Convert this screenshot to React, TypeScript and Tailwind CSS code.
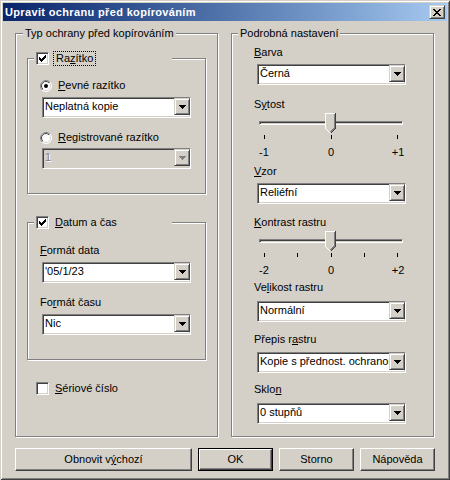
import { useId, type ReactNode } from "react";

const sunken =
  "border border-t-[#808080] border-l-[#808080] border-b-white border-r-white shadow-[inset_1px_1px_0_#404040,inset_-1px_-1px_0_#D4D0C8]";
const raisedSmall =
  "border border-t-[#D4D0C8] border-l-[#D4D0C8] border-b-[#404040] border-r-[#404040] shadow-[inset_1px_1px_0_#fff,inset_-1px_-1px_0_#808080]";

const CHECK = ["......x", ".....xx", "x...xxx", "xx.xxx.", "xxxxx..", ".xxx...", "..x...."];
const ARROW = ["xxxxxxx", ".xxxxx.", "..xxx..", "...x..."];
const CLOSE = ["xx....xx", ".xx..xx.", "..xxxx..", "...xx...", "..xxxx..", ".xx..xx.", "xx....xx"];

function Pixels({ rows, color }: { rows: string[]; color: string }) {
  let d = "";
  rows.forEach((r, y) =>
    r.split("").forEach((c, x) => {
      if (c === "x") d += `M${x} ${y}h1v1h-1z`;
    })
  );
  return (
    <svg width={rows[0].length} height={rows.length} shapeRendering="crispEdges" className="block">
      <path d={d} fill={color} />
    </svg>
  );
}

function Checkbox({ checked }: { checked?: boolean }) {
  return (
    <div className={`w-[13px] h-[13px] shrink-0 bg-white flex items-center justify-center ${sunken}`}>
      {checked && <Pixels rows={CHECK} color="#000" />}
    </div>
  );
}

function Radio({ checked }: { checked?: boolean }) {
  const id = useId();
  return (
    <svg width="12" height="12" viewBox="0 0 12 12" className="block shrink-0">
      <defs>
        <linearGradient id={id + "a"} x1="0" y1="0" x2="1" y2="1">
          <stop offset="0.5" stopColor="#808080" />
          <stop offset="0.5" stopColor="#fff" />
        </linearGradient>
        <linearGradient id={id + "b"} x1="0" y1="0" x2="1" y2="1">
          <stop offset="0.5" stopColor="#404040" />
          <stop offset="0.5" stopColor="#D4D0C8" />
        </linearGradient>
      </defs>
      <circle cx="6" cy="6" r="5.5" fill="#fff" stroke={`url(#${id}a)`} />
      <circle cx="6" cy="6" r="4.5" fill="#fff" stroke={`url(#${id}b)`} />
      {checked && <circle cx="6" cy="6" r="2" fill="#000" />}
    </svg>
  );
}

function Combo({ value, className = "", disabled }: { value: string; className?: string; disabled?: boolean }) {
  return (
    <div
      className={`w-[149px] h-[21px] flex ${sunken} ${disabled ? "bg-[#D4D0C8]" : "bg-white"} ${className}`}
    >
      <div
        className={`flex-1 min-w-0 overflow-hidden whitespace-nowrap pl-[2px] leading-[17px] ${
          disabled ? "text-[#808080] [text-shadow:1px_1px_0_#fff]" : ""
        }`}
      >
        {value}
      </div>
      <div className={`w-[16px] h-[17px] shrink-0 bg-[#D4D0C8] flex items-center justify-center ${raisedSmall}`}>
        <Pixels rows={ARROW} color={disabled ? "#808080" : "#000"} />
      </div>
    </div>
  );
}

function Thumb() {
  return (
    <svg width="11" height="21" viewBox="0 0 11 21" shapeRendering="crispEdges" className="block">
      <path d="M0 0H11V16L5.5 21.5L0 16Z" fill="#D4D0C8" />
      <path d="M0.5 16V0.5H10" fill="none" stroke="#fff" />
      <path d="M0.5 15.5L5 20" fill="none" stroke="#fff" />
      <path d="M10.5 0V15.5L5.5 20.5" fill="none" stroke="#404040" />
      <path d="M9.5 1V15L5.5 19" fill="none" stroke="#808080" />
    </svg>
  );
}

function Slider({ ticks, labels, className = "" }: { ticks: number; labels: string[]; className?: string }) {
  return (
    <div className={`ml-[27px] w-[144px] ${className}`}>
      <div className="relative h-[21px]">
        <div className={`absolute top-[8px] left-0 right-0 h-[4px] ${sunken}`} />
        <div className="absolute top-0 left-[66px]">
          <Thumb />
        </div>
      </div>
      <div className="mt-[1px] mx-[5px] h-[4px] flex justify-between">
        {Array.from({ length: ticks }).map((_, i) => (
          <div key={i} className="w-[1px] h-full bg-black" />
        ))}
      </div>
      <div className="mt-[7px] mx-[-5px] flex justify-between">
        {labels.map((l) => (
          <div key={l} className="w-[20px] text-center">
            {l}
          </div>
        ))}
      </div>
    </div>
  );
}

function Group({
  legend,
  legendClass,
  className = "",
  children,
}: {
  legend: ReactNode;
  legendClass: string;
  className?: string;
  children: ReactNode;
}) {
  return (
    <div className={`relative border border-[#808080] shadow-[inset_1px_1px_0_#fff,1px_1px_0_#fff] ${className}`}>
      <div className={`absolute flex items-center bg-[#D4D0C8] ${legendClass}`}>{legend}</div>
      {children}
    </div>
  );
}

function Button({ w, def, children }: { w: string; def?: boolean; children: ReactNode }) {
  const inner = (
    <div className="h-full flex items-center justify-center border border-t-white border-l-white border-b-[#404040] border-r-[#404040] shadow-[inset_-1px_-1px_0_#808080]">
      {children}
    </div>
  );
  return <div className={`${w} h-[23px] ${def ? "border border-black" : ""}`}>{inner}</div>;
}

function Label({ children, className = "" }: { children: ReactNode; className?: string }) {
  return <div className={`h-[13px] whitespace-nowrap ${className}`}>{children}</div>;
}

export default function App() {
  return (
    <div className="w-[450px] h-[480px] bg-[#D4D0C8] p-[3px] font-['Liberation_Sans',Arial,sans-serif] text-[11px] leading-[13px] text-black select-none shadow-[inset_1px_1px_0_#D4D0C8,inset_-1px_-1px_0_#404040,inset_2px_2px_0_#fff,inset_-2px_-2px_0_#808080]">
      {/* title bar */}
      <div className="h-[18px] flex items-center justify-between bg-linear-to-r from-[#0A246A] to-[#A6CAF0] pl-[2px] pr-[2px]">
        <span className="font-bold text-white tracking-[0.35px]">Upravit ochranu před kopírováním</span>
        <div className={`w-[16px] h-[14px] bg-[#D4D0C8] flex items-center justify-center ${raisedSmall}`}>
          <Pixels rows={CLOSE} color="#000" />
        </div>
      </div>

      <div className="flex gap-[13px] pl-[12px] mt-[12px]">
        {/* left group */}
        <Group
          legend="Typ ochrany před kopírováním"
          legendClass="left-[7px] top-[-7px] h-[13px] px-[2px]"
          className="w-[203px] h-[404px] flex flex-col"
        >
          <Group
            className="ml-[11px] mt-[24px] w-[179px] h-[136px] flex flex-col"
            legendClass="left-[6px] top-[-8px] h-[15px] w-[138px] pl-[2px]"
            legend={
              <>
                <Checkbox checked />
                <span className="ml-[4px] px-[2px] h-[15px] leading-[13px] border border-dotted border-black">
                  Ra<u>z</u>ítko
                </span>
              </>
            }
          >
            <div className="ml-[12px] mt-[20px] h-[13px] flex items-center">
              <Radio checked />
              <span className="ml-[6px]">
                <u>P</u>evné razítko
              </span>
            </div>
            <Combo value="Neplatná kopie" className="ml-[14px] mt-[5px]" />
            <div className="ml-[12px] mt-[13px] h-[13px] flex items-center">
              <Radio />
              <span className="ml-[6px]">
                <u>R</u>egistrované razítko
              </span>
            </div>
            <Combo value="1" disabled className="ml-[14px] mt-[4px]" />
          </Group>

          <Group
            className="ml-[11px] mt-[28px] w-[179px] h-[138px] flex flex-col"
            legendClass="left-[6px] top-[-8px] h-[15px] w-[138px] pl-[2px]"
            legend={
              <>
                <Checkbox checked />
                <span className="ml-[6px]">
                  <u>D</u>atum a čas
                </span>
              </>
            }
          >
            <Label className="ml-[12px] mt-[21px]">
              <u>F</u>ormát data
            </Label>
            <Combo value="'05/1/23" className="ml-[14px] mt-[5px]" />
            <Label className="ml-[12px] mt-[13px]">
              Fo<u>r</u>mát času
            </Label>
            <Combo value="Nic" className="ml-[14px] mt-[5px]" />
          </Group>

          <div className="ml-[20px] mt-[22px] h-[13px] flex items-center">
            <Checkbox />
            <span className="ml-[6px]">
              <u>S</u>ériové číslo
            </span>
          </div>
        </Group>

        {/* right group */}
        <Group
          legend="Podrobná nastavení"
          legendClass="left-[6px] top-[-7px] h-[13px] px-[2px]"
          className="w-[203px] h-[404px] flex flex-col pt-[12px]"
        >
          <Label className="ml-[22px]">
            <u>B</u>arva
          </Label>
          <Combo value="Černá" className="ml-[25px] mt-[5px]" />
          <Label className="ml-[22px] mt-[13px]">
            S<u>y</u>tost
          </Label>
          <Slider ticks={3} labels={["-1", "0", "+1"]} className="mt-[2px]" />
          <Label className="ml-[22px] mt-[6px]">
            <u>V</u>zor
          </Label>
          <Combo value="Reliéfní" className="ml-[25px] mt-[5px]" />
          <Label className="ml-[22px] mt-[12px]">
            <u>K</u>ontrast rastru
          </Label>
          <Slider ticks={5} labels={["-2", "0", "+2"]} className="mt-[2px]" />
          <Label className="ml-[22px] mt-[4px]">
            Ve<u>l</u>ikost rastru
          </Label>
          <Combo value="Normální" className="ml-[25px] mt-[7px]" />
          <Label className="ml-[22px] mt-[11px]">
            Přepis r<u>a</u>stru
          </Label>
          <Combo value="Kopie s přednost. ochranou" className="ml-[25px] mt-[6px]" />
          <Label className="ml-[22px] mt-[10px]">
            Sklo<u>n</u>
          </Label>
          <Combo value="0 stupňů" className="ml-[25px] mt-[7px]" />
        </Group>
      </div>

      <div className="flex gap-[6px] pl-[12px] mt-[11px]">
        <Button w="w-[177px]">
          Obnovit v<u>ý</u>chozí
        </Button>
        <Button w="w-[75px]" def>
          OK
        </Button>
        <Button w="w-[75px]">Storno</Button>
        <Button w="w-[75px]">Nápověda</Button>
      </div>
    </div>
  );
}
